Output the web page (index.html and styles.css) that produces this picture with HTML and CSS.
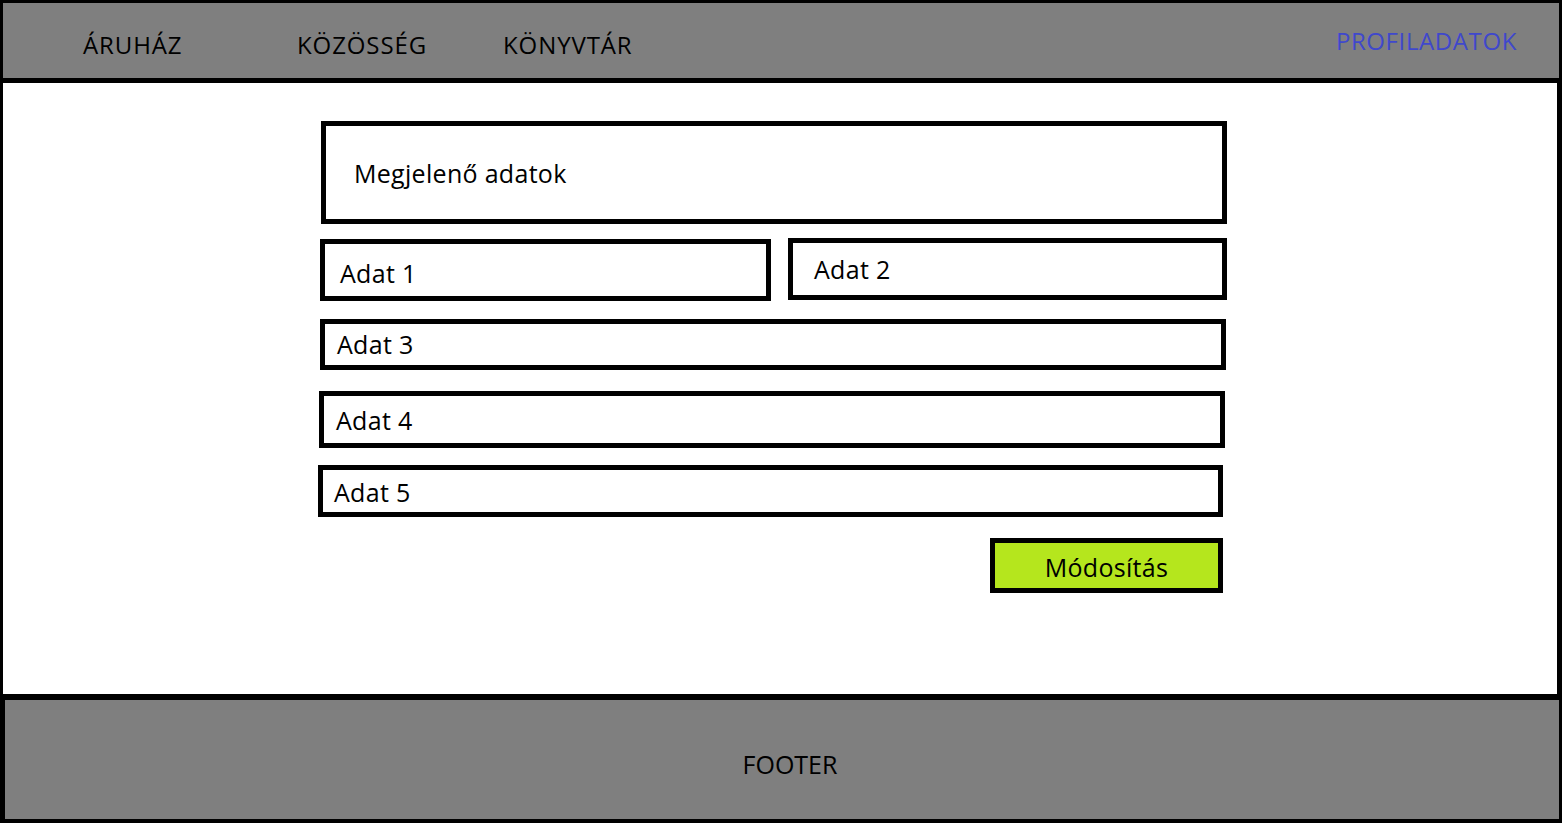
FILE: index.html
```html
<!DOCTYPE html>
<html lang="hu">
<head>
<meta charset="utf-8">
<title>Profiladatok</title>
<link rel="stylesheet" href="styles.css">
</head>
<body>
<div class="page">
  <header class="topbar">
    <nav class="nav">
      <a class="nav-link" href="#">ÁRUHÁZ</a>
      <a class="nav-link" href="#">KÖZÖSSÉG</a>
      <a class="nav-link" href="#">KÖNYVTÁR</a>
      <span class="nav-spacer"></span>
      <a class="nav-link nav-link--active" href="#">PROFILADATOK</a>
    </nav>
  </header>
  <main class="content">
    <div class="form">
      <div class="box box--title">Megjelenő adatok</div>
      <div class="row">
        <div class="box box--a1">Adat 1</div>
        <div class="box box--a2">Adat 2</div>
      </div>
      <div class="box box--a3">Adat 3</div>
      <div class="box box--a4">Adat 4</div>
      <div class="box box--a5">Adat 5</div>
      <div class="actions">
        <button class="btn" type="button">Módosítás</button>
      </div>
    </div>
  </main>
  <footer class="footer">FOOTER</footer>
</div>
</body>
</html>
```
FILE: styles.css
```css
* { box-sizing: border-box; }
html, body { margin: 0; padding: 0; }
body {
  font-family: "Open Sans", "Noto Sans", sans-serif;
  color: #000;
  background: #fff;
}
.page {
  display: flex;
  flex-direction: column;
  height: 823px;
}
.topbar {
  height: 83px;
  background: #7f7f7f;
  border: 3px solid #000;
  border-bottom-width: 5px;
}
.nav {
  display: grid;
  grid-template-columns: 214px 206px auto 1fr auto;
  align-items: start;
  padding: 26px 42px 0 80px;
}
.nav-link {
  font-size: 24px;
  line-height: 32px;
  letter-spacing: 0.9px;
  color: #000;
  text-decoration: none;
}
.nav-link--active {
  color: #3f48cc;
  margin-top: -4px;
  letter-spacing: 0.6px;
}
.content {
  flex: 1;
  border-left: 3px solid #000;
  border-right: 5px solid #000;
  background: #fff;
}
.form {
  width: 907px;
  margin-left: 317px;
  display: flex;
  flex-direction: column;
}
.box {
  border: 5px solid #000;
  display: flex;
  align-items: center;
  font-size: 25px;
  line-height: 34px;
  letter-spacing: 0.3px;
  background: #fff;
}
.box--title {
  margin-top: 38px;
  margin-left: 1px;
  height: 103px;
  padding-left: 28px;
}
.row {
  display: grid;
  grid-template-columns: 451px 1fr;
  column-gap: 17px;
  margin-top: 14px;
  align-items: start;
}
.box--a1 {
  margin-top: 1px;
  height: 62px;
  padding: 6px 0 0 15px;
}
.box--a2 {
  height: 62px;
  padding-left: 21px;
}
.box--a3 {
  margin-top: 18px;
  width: 906px;
  height: 51px;
  padding: 0 0 1px 12px;
}
.box--a4 {
  margin-top: 21px;
  margin-left: -1px;
  width: 906px;
  height: 57px;
  padding-left: 12px;
}
.box--a5 {
  margin-top: 17px;
  margin-left: -2px;
  width: 905px;
  height: 52px;
  padding: 2px 0 0 11px;
}
.actions {
  display: flex;
  justify-content: flex-end;
  padding-right: 4px;
  margin-top: 21px;
}
.btn {
  width: 233px;
  height: 55px;
  border: 5px solid #000;
  background: #b5e61d;
  font-family: inherit;
  font-size: 25px;
  line-height: 34px;
  letter-spacing: 0.3px;
  color: #000;
  padding: 2px 0 0;
  border-radius: 0;
  cursor: pointer;
}
.footer {
  height: 129px;
  background: #7f7f7f;
  border-style: solid;
  border-color: #000;
  border-width: 6px 3px 4px 5px;
  display: flex;
  align-items: center;
  justify-content: center;
  font-size: 25px;
  line-height: 34px;
  padding: 8px 0 0 16px;
}
```
